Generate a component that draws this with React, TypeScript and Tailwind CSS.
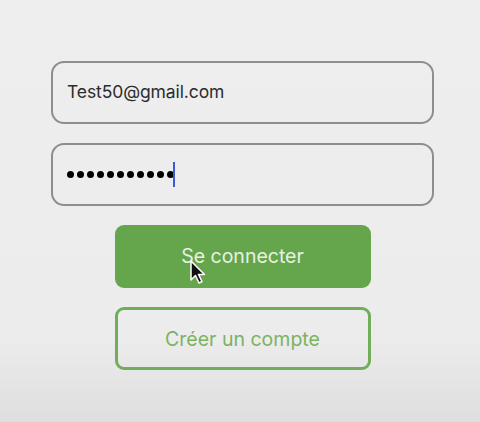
import React from "react";

export default function App() {
  return (
    <div
      className="w-[480px] h-[422px] overflow-hidden bg-[linear-gradient(to_bottom,#eeeeee_0%,#ececec_80%,#dedede_100%)] flex flex-col items-center pt-[61px]"
      style={{ fontFamily: "Inter, 'Liberation Sans', sans-serif" }}
    >
      <div className="w-[383px] h-[63px] ml-[5px] rounded-[13px] border-2 border-[#8e8e8e] flex items-center pl-[14px]">
        <span className="text-[17.5px] text-[#2c2c2c] tracking-[-0.1px]">Test50@gmail.com</span>
      </div>
      <div className="w-[383px] h-[63px] ml-[5px] mt-[19px] rounded-[13px] border-2 border-[#8e8e8e] flex items-center pl-[14px]">
        <span className="flex items-center gap-[3px]">
          {Array.from({ length: 11 }).map((_, i) => (
            <span key={i} className="w-[7px] h-[7px] rounded-full bg-black" />
          ))}
        </span>
        <span className="w-[2px] h-[25px] bg-[#3b5bd6] -ml-[1px]" />
      </div>
      <div className="relative w-[256px] h-[63px] ml-[5px] mt-[19px] rounded-[9px] bg-[#65a64c] flex items-center justify-center pt-[1px]">
        <span className="text-[19.5px] text-[#e8f1e2]">Se connecter</span>
        <svg
          className="absolute left-[74px] top-[35px]"
          width="20"
          height="26"
          viewBox="0 0 20 26"
        >
          <path
            d="M2 1 L2 20 L6.5 15.5 L10 23 L13 21.5 L9.5 14.5 L15.5 14.5 Z"
            fill="#111"
            stroke="#fff"
            strokeWidth="1.5"
            strokeLinejoin="round"
          />
        </svg>
      </div>
      <div className="w-[256px] h-[63px] ml-[5px] mt-[19px] rounded-[9px] border-[3px] border-[#72ad5c] flex items-center justify-center pt-[2px]">
        <span className="text-[19.5px] text-[#7ab364]">Créer un compte</span>
      </div>
    </div>
  );
}
